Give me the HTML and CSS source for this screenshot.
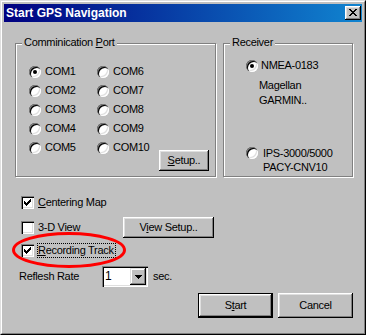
FILE: index.html
```html
<!DOCTYPE html>
<html>
<head>
<meta charset="utf-8">
<title>Start GPS Navigation</title>
<link rel="stylesheet" href="styles.css">
</head>
<body>
<div class="window">
  <div class="frame">
    <div class="titlebar">
      <span class="title">Start GPS Navigation</span>
      <div class="close">
        <svg width="8" height="7" viewBox="0 0 8 7" shape-rendering="crispEdges"><path d="M0 0h2v1H0zM6 0h2v1H6zM1 1h2v1H1zM5 1h2v1H5zM2 2h4v1H2zM3 3h2v1H3zM2 4h4v1H2zM1 5h2v1H1zM5 5h2v1H5zM0 6h2v1H0zM6 6h2v1H6z" fill="#000"/></svg>
      </div>
    </div>
    <div class="content">
      <div class="groups">
        <div class="group comm">
          <span class="legend">Comminication <u>P</u>ort</span>
          <div class="ports">
            <div class="opt"><span class="radio checked"></span>COM1</div>
            <div class="opt"><span class="radio"></span>COM2</div>
            <div class="opt"><span class="radio"></span>COM3</div>
            <div class="opt"><span class="radio"></span>COM4</div>
            <div class="opt"><span class="radio"></span>COM5</div>
            <div class="opt"><span class="radio"></span>COM6</div>
            <div class="opt"><span class="radio"></span>COM7</div>
            <div class="opt"><span class="radio"></span>COM8</div>
            <div class="opt"><span class="radio"></span>COM9</div>
            <div class="opt"><span class="radio"></span>COM10</div>
          </div>
          <button class="btn setup"><span><u>S</u>etup..</span></button>
        </div>
        <div class="group recv">
          <span class="legend">Receiver</span>
          <div class="opt first"><span class="radio checked"></span>NMEA-0183</div>
          <div class="desc">Magellan<br>GARMIN..</div>
          <div class="opt second"><span class="radio"></span><span>IPS-3000/5000<br>PACY-CNV10</span></div>
        </div>
      </div>

      <div class="row r1">
        <span class="check on"><svg width="7" height="7" viewBox="0 0 7 7" shape-rendering="crispEdges"><path d="M0 2h1v3H0zM1 3h1v3H1zM2 4h1v3H2zM3 3h1v3H3zM4 2h1v3H4zM5 1h1v3H5zM6 0h1v3H6z" fill="#000"/></svg></span>
        <span class="lbl"><u>C</u>entering Map</span>
      </div>
      <div class="row r2">
        <div class="cell">
          <span class="check"></span>
          <span class="lbl">3-D View</span>
        </div>
        <button class="btn vsetup"><span>V<u>i</u>ew Setup..</span></button>
      </div>
      <div class="row r3">
        <span class="check on"><svg width="7" height="7" viewBox="0 0 7 7" shape-rendering="crispEdges"><path d="M0 2h1v3H0zM1 3h1v3H1zM2 4h1v3H2zM3 3h1v3H3zM4 2h1v3H4zM5 1h1v3H5zM6 0h1v3H6z" fill="#000"/></svg></span>
        <span class="lbl focus"><u>R</u>ecording Track</span>
        <svg class="ring" width="114" height="36" viewBox="0 0 114 36"><ellipse cx="57" cy="18" rx="55.5" ry="16.5" fill="none" stroke="#f00" stroke-width="3"/></svg>
      </div>
      <div class="row r4">
        <span class="rate">Reflesh Rate</span>
        <div class="combo">
          <span class="val">1</span>
          <span class="drop"><svg width="7" height="4" viewBox="0 0 7 4" shape-rendering="crispEdges"><path d="M0 0h7v1H0zM1 1h5v1H1zM2 2h3v1H2zM3 3h1v1H3z" fill="#000"/></svg></span>
        </div>
        <span class="sec">sec.</span>
      </div>
      <div class="actions">
        <button class="btn default"><span>S<u>t</u>art</span></button>
        <button class="btn"><span>Cancel</span></button>
      </div>
    </div>
  </div>
</div>
</body>
</html>
```
FILE: styles.css
```css
* { box-sizing: border-box; }
html, body { margin: 0; padding: 0; background: #c0c0c0; }
body {
  width: 366px;
  height: 335px;
  font-family: "Liberation Sans", Arial, sans-serif;
  font-size: 11px;
  line-height: 13px;
  letter-spacing: -0.3px;
  color: #000;
}
u { text-decoration: underline; text-underline-offset: 1px; }

.window {
  width: 366px;
  height: 335px;
  border: 1px solid;
  border-color: #dfdfdf #000 #000 #dfdfdf;
  background: #c0c0c0;
}
.frame {
  height: 100%;
  border: 1px solid;
  border-color: #fff #808080 #808080 #fff;
  padding: 2px;
  display: flex;
  flex-direction: column;
}
.titlebar {
  height: 18px;
  flex: none;
  background: linear-gradient(to right, #000080, #1084d0);
  display: flex;
  align-items: center;
  padding: 0 1px 0 2px;
}
.title {
  flex: 1;
  color: #fff;
  font-weight: bold;
  font-size: 12px;
  letter-spacing: 0;
}
.close {
  width: 16px;
  height: 14px;
  background: #c0c0c0;
  box-shadow: inset -1px -1px #000, inset 1px 1px #fff, inset -2px -2px #808080, inset 2px 2px #dfdfdf;
  display: flex;
  align-items: center;
  justify-content: center;
}
.close svg { display: block; margin: 0 1px 1px 0; }

.content {
  flex: 1;
  padding: 21px 9px 0 11px;
}
.groups { display: flex; gap: 7px; }
.group {
  position: relative;
  height: 134px;
  border: 1px solid #808080;
  box-shadow: inset 1px 1px #fff, 1px 1px #fff;
}
.legend {
  position: absolute;
  top: -8px;
  left: 6px;
  padding: 0 2px;
  background: #c0c0c0;
  line-height: 13px;
}
.comm {
  width: 201px;
  padding: 18px 0 0 13px;
  display: flex;
}
.ports {
  display: grid;
  grid-template-columns: 68px 52px;
  grid-template-rows: repeat(5, 19px);
  grid-auto-flow: column;
}
.opt { display: flex; align-items: center; gap: 4px; white-space: nowrap; }

.radio {
  position: relative;
  flex: none;
  width: 12px;
  height: 12px;
  border-radius: 50%;
  background: #fff;
  box-shadow: inset 1px 1px 0 #808080, inset 2px 2px 0 #000, inset -1px -1px 0 #fff, inset -2px -2px 0 #dfdfdf;
}
.radio.checked::after {
  content: "";
  position: absolute;
  left: 4px;
  top: 4px;
  width: 4px;
  height: 4px;
  border-radius: 50%;
  background: #000;
}

.btn {
  font: inherit;
  letter-spacing: inherit;
  color: #000;
  background: #c0c0c0;
  border: 0;
  padding: 0;
  margin: 0;
  box-shadow: inset -1px -1px #000, inset 1px 1px #fff, inset -2px -2px #808080, inset 2px 2px #dfdfdf;
  display: flex;
  align-items: center;
  justify-content: center;
  width: 75px;
  height: 25px;
}
.btn.default {
  box-shadow: inset 0 0 0 1px #000, inset -2px -2px #000, inset 2px 2px #fff, inset -3px -3px #808080, inset 3px 3px #dfdfdf;
}
.setup {
  width: 50px;
  height: 21px;
  margin: auto 6px 5px auto;
}

.recv {
  width: 130px;
  padding: 15px 0 2px 22px;
  display: flex;
  flex-direction: column;
}
.recv .first { height: 13px; gap: 3px; }
.desc { margin: 6px 0 0 13px; line-height: 15px; }
.recv .second {
  margin-top: auto;
  align-items: flex-start;
  gap: 5px;
  line-height: 14px;
}
.recv .second .radio { margin-top: 1px; }

.row {
  display: flex;
  align-items: center;
  height: 21px;
  margin-left: 6px;
}
.r1 { margin-top: 15px; }
.r2 { margin-top: 4px; display: grid; grid-template-columns: 102px 91px; }
.r2 .cell { display: flex; align-items: center; }
.r3 { margin-top: 2px; position: relative; }
.r4 { margin-top: 5px; margin-left: 4px; }

.check {
  flex: none;
  width: 13px;
  height: 13px;
  background: #fff;
  box-shadow: inset 1px 1px 0 #808080, inset 2px 2px 0 #000, inset -1px -1px 0 #fff, inset -2px -2px 0 #dfdfdf;
  display: flex;
  align-items: center;
  justify-content: center;
}
.check svg { display: block; }
.lbl { margin-left: 4px; white-space: nowrap; }
.lbl.focus {
  margin-left: 3px;
  border: 1px dotted #000;
  line-height: 13px;
  padding-right: 1px;
}
.vsetup { width: 91px; height: 21px; }
.ring {
  position: absolute;
  left: -9px;
  top: -8px;
  pointer-events: none;
}

.rate { width: 83px; white-space: nowrap; }
.combo {
  width: 46px;
  height: 21px;
  background: #fff;
  box-shadow: inset 1px 1px 0 #808080, inset 2px 2px 0 #000, inset -1px -1px 0 #fff, inset -2px -2px 0 #dfdfdf;
  display: flex;
  align-items: center;
  padding: 2px;
}
.val { padding-left: 1px; flex: 1; font-size: 12px; }
.drop {
  width: 16px;
  height: 17px;
  background: #c0c0c0;
  box-shadow: inset -1px -1px #000, inset 1px 1px #dfdfdf, inset -2px -2px #808080, inset 2px 2px #fff;
  display: flex;
  align-items: center;
  justify-content: center;
}
.drop svg { display: block; }
.sec { margin-left: 5px; }

.actions {
  margin-top: 6px;
  display: flex;
  justify-content: flex-end;
  gap: 5px;
}
```
